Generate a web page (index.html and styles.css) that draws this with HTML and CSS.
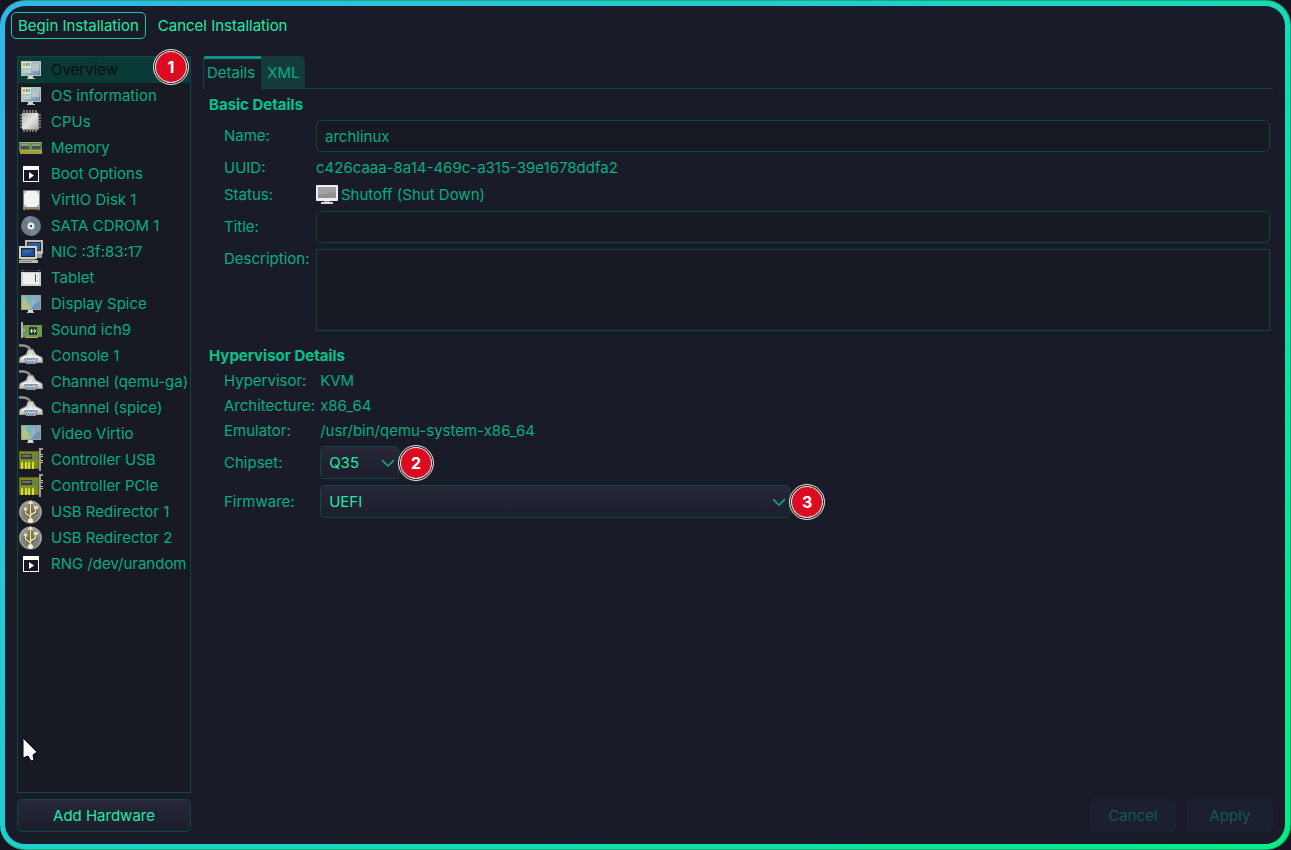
FILE: index.html
```
<!DOCTYPE html>
<html lang="en">
<head>
    <meta charset="utf-8">
    <title>archlinux</title>
    <link rel="stylesheet" href="styles.css">
</head>
<body>
    <svg class="sprite" aria-hidden="true">
        <defs>
            <linearGradient id="screen" x1="0" y1="0" x2="1" y2="1">
                <stop offset="0" stop-color="#a8c8a0"/>
                <stop offset="0.5" stop-color="#a5bdc8"/>
                <stop offset="1" stop-color="#6b83ad"/>
            </linearGradient>
            <linearGradient id="metal" x1="0" y1="0" x2="1" y2="1">
                <stop offset="0" stop-color="#a5a5a3"/>
                <stop offset="0.5" stop-color="#e6e6e4"/>
                <stop offset="1" stop-color="#a9a9a7"/>
            </linearGradient>
            <linearGradient id="disc" x1="0" y1="0" x2="0" y2="1">
                <stop offset="0" stop-color="#9a9a9a"/>
                <stop offset="1" stop-color="#777"/>
            </linearGradient>
            <linearGradient id="plug" x1="0" y1="0" x2="0" y2="1">
                <stop offset="0" stop-color="#c9c9c6"/>
                <stop offset="0.6" stop-color="#f4f4f2"/>
                <stop offset="1" stop-color="#b5b5b1"/>
            </linearGradient>
        </defs>
        <symbol id="computer" viewBox="0 0 24 24">
            <rect x="2" y="3" width="20" height="15" fill="#b9bec0"/>
            <rect x="3" y="4" width="18" height="13" fill="url(#screen)"/>
            <path d="M3 4h9v6H3z" fill="#dde5d0"/>
            <path d="M4 5h2v3H4z" fill="#e88d3b"/>
            <path d="M7 5h2v3H7z" fill="#4ab665"/>
            <path d="M10 5h1v3h-1z" fill="#4b8fd0"/>
            <path d="M4 11h8v4H4z" fill="#b9cfbd"/>
            <path d="M13 6h7v7h-7z" fill="#b3c3cc"/>
            <path d="M9 18h5v2H9z" fill="#d5d8da"/>
            <path d="M8 20h8v1H8z" fill="#c1c4c6"/>
        </symbol>
        <symbol id="cpu" viewBox="0 0 24 24">
            <path d="M5 0v22M8 0v22M11 0v22M14 0v22M17 0v22M1 5h21M1 8h21M1 11h21M1 14h21M1 17h21" stroke="#8d8a82" stroke-width="1.6"/>
            <rect x="3" y="3" width="17" height="17" rx="1" fill="#8e8e8c"/>
            <rect x="3" y="3" width="16" height="16" rx="1" fill="url(#metal)"/>
        </symbol>
        <symbol id="memory" viewBox="0 0 24 24">
            <rect x="0" y="6" width="23" height="9" fill="#5c8848"/>
            <rect x="0" y="6" width="23" height="1" fill="#9ab28c"/>
            <path d="M2 8h8v5H2zM13 8h8v5h-8z" fill="#4a4f4b"/>
            <path d="M2 8h8v2H2zM13 8h8v2h-8z" fill="#8f948e"/>
            <path d="M11 7h1v7h-1z" fill="#48c04a"/>
            <path d="M1 14h22v4H1z" fill="#b5ac45"/>
            <path d="M3 15v3M5 15v3M7 15v3M9 15v3M11 15v3M13 15v3M15 15v3M17 15v3M19 15v3M21 15v3" stroke="#7d8232" stroke-width="0.800"/>
        </symbol>
        <symbol id="run" viewBox="0 0 24 24">
            <path fill-rule="evenodd" d="M4 4h16v16H4zM5 8v11h14V8z" fill="#fff"/>
            <path d="M10 10l5 3.500-5 3.500z" fill="#fff"/>
        </symbol>
        <symbol id="disk" viewBox="0 0 24 24">
            <rect x="4" y="2" width="17" height="20" rx="1" fill="#85898a"/>
            <rect x="5" y="3" width="15" height="16" rx="4" fill="#f2f3f3"/>
            <path d="M5 3h2v2H5zM18 3h2v2h-2zM5 17h2v2H5zM18 17h2v2h-2z" fill="#b9bdbd"/>
            <path d="M7 20h11v2H7z" fill="#5b5040"/>
            <path d="M8 20h3v1H8zM12 20h2v1h-2zM15 20h2v1h-2z" fill="#e0a040"/>
        </symbol>
        <symbol id="cdrom" viewBox="0 0 24 24">
            <circle cx="12" cy="12" r="10" fill="#6b7a89"/>
            <path d="M12 12L5 4.900A10 10 0 0 1 12 2zM12 12l7 7.100A10 10 0 0 1 12 22z" fill="#778694"/>
            <circle cx="12" cy="12" r="3.500" fill="#e9ecee"/>
            <rect x="11" y="11" width="2" height="2" fill="#3a3f44"/>
        </symbol>
        <symbol id="nic" viewBox="0 0 24 24">
            <path d="M6 0h18v14H6z" fill="#bdbbb2"/>
            <path d="M8 2h14v9H8z" fill="#222c3d"/>
            <path d="M9 3h12v7H9z" fill="#2d5d9f"/>
            <path d="M17 14h6v4h-6z" fill="#9a988f"/>
            <path d="M0 6h18v13H0z" fill="#d2d0c7"/>
            <path d="M2 8h14v9H2z" fill="#1a2740"/>
            <path d="M3 9h12v7H3z" fill="#1e4f94"/>
            <path d="M4 10h10l-3 3-7 2z" fill="#2f65a6"/>
            <path d="M2 19h14v1H2z" fill="#77756e"/>
            <path d="M0 20h19v3H0z" fill="#bab8ae"/>
            <path d="M1 21h12v1H1z" fill="#858379"/>
        </symbol>
        <symbol id="tablet" viewBox="0 0 24 24">
            <path d="M2 4h20v1H2z" fill="#30343b"/>
            <path d="M3 4h2v1H3zM19 4h2v1h-2z" fill="#5a7694"/>
            <rect x="2" y="6" width="20" height="14" fill="#cfd1d1"/>
            <rect x="4" y="7" width="16" height="11" fill="#eeefef"/>
            <path d="M16.500 8v8" stroke="#555"/>
            <path d="M18.500 10v1M18.500 14v1" stroke="#aaa"/>
        </symbol>
        <symbol id="display" viewBox="0 0 24 24">
            <rect x="2" y="3" width="20" height="15" fill="#9aa1a5"/>
            <rect x="3" y="4" width="18" height="13" fill="#7fb0b5"/>
            <path d="M3 4h6l-6 7z" fill="#8fc0a8"/>
            <path d="M3 10l4-3 5 10H3z" fill="#b5c47c"/>
            <path d="M9 4h6l-5 7-3-4z" fill="#72b7b0"/>
            <path d="M15 4h6v5l-5 3z" fill="#8fa3c2"/>
            <path d="M15 4l1 8-4 5-2-6z" fill="#86b6c4"/>
            <path d="M16 12l5-3v8h-9z" fill="#7590b8"/>
            <path d="M9 18h5v2H9z" fill="#dce0e2"/>
            <path d="M8 20h7v1H8z" fill="#c1c4c6"/>
        </symbol>
        <symbol id="sound" viewBox="0 0 24 24">
            <path d="M3 7h20v12H3z" fill="#6a9c4c"/>
            <path d="M6 19h13v1H6z" fill="#c6ae47"/>
            <path d="M2 4h2v16H2z" fill="#a9b4b7"/>
            <path d="M4 8h2v2H4z" fill="#d14584"/>
            <path d="M4 11h2v2H4z" fill="#e0a23a"/>
            <path d="M4 14h2v2H4z" fill="#4197bc"/>
            <rect x="10" y="9" width="8" height="8" fill="#303632"/>
            <path d="M11 13h5M12.500 11v4M15 11l2 2-2 2" fill="none" stroke="#dce3df"/>
        </symbol>
        <symbol id="serial" viewBox="0 0 24 24">
            <path d="M0 1.500c7-.5 11 1 12 6" fill="none" stroke="#777b7b" stroke-width="2.600"/>
            <path d="M0 1.500c7-.5 11 1 12 6" fill="none" stroke="#a9aba9"/>
            <path d="M9 5h5l3 5 6 3q1 1 1 6H0q0-5 1-6l6-3z" fill="#9b9b97"/>
            <path d="M9.500 6h4l3 5 6 3 .5 4H1l.5-4 6-3z" fill="url(#plug)"/>
            <path d="M10 8l-2 5M13 8l2 5" stroke="#c4c4c0"/>
            <path d="M5 14h14l-2 6H7z" fill="#8c96a3"/>
            <path d="M7 15h10l-1 3H8z" fill="#b9cde6"/>
            <path d="M8 15h1v1H8zM10 15h1v1h-1zM12 15h1v1h-1zM14 15h1v1h-1zM9 17h1v1H9zM11 17h1v1h-1zM13 17h1v1h-1z" fill="#5d7ba5"/>
        </symbol>
        <symbol id="controller" viewBox="0 0 24 24">
            <path d="M0 3h20v18H0z" fill="#5f681b"/>
            <path d="M1 4h18v16H1z" fill="#7c8722"/>
            <path d="M2 6h11v5H2z" fill="#343a38"/>
            <path d="M3 7h9v2H3z" fill="#6d7470"/>
            <path d="M13 8h5M13 10h5" stroke="#397b9c"/>
            <path d="M2 21v-6l1-2 1 2v6zM6 21v-6l1-2 1 2v6zM9 21v-6l1-2 1 2v6zM13 21v-6l1-2 1 2v6z" fill="#d6e32f"/>
            <path d="M24 1h-3v22" fill="none" stroke="#9b9d98" stroke-width="2"/>
            <path d="M22 6h2v1h-2zM22 8h2v1h-2zM22 12h2v1h-2zM22 14h2v1h-2z" fill="#c8cac5"/>
        </symbol>
        <symbol id="usb" viewBox="0 0 24 24">
            <circle cx="11.500" cy="12" r="11.500" fill="url(#disc)"/>
            <circle cx="11.500" cy="12" r="10.500" fill="none" stroke="#aaa"/>
            <g fill="none" stroke="#544d31" stroke-width="3.500">
                <path d="M11.500 4v16M6.500 9v4l5 4M16.500 7v5l-5 3"/>
            </g>
            <g fill="none" stroke="#efe29c" stroke-width="1.600">
                <path d="M11.500 4v16M6.500 9v4l5 4M16.500 7v5l-5 3"/>
            </g>
            <path d="M11.500 0l3 4h-6zM15 6h4v3h-4z" fill="#efe29c"/>
            <circle cx="6.500" cy="9" r="1.800" fill="#efe29c"/>
            <circle cx="11.500" cy="20.500" r="2.500" fill="#f5f0d0"/>
        </symbol>
        <symbol id="shutoff" viewBox="0 0 22 20">
            <rect width="22" height="16" rx="1" fill="#eeeeec"/>
            <rect x="2" y="2" width="18" height="11" fill="#919191"/>
            <path d="M2 2h18v5L2 10z" fill="#a2a2a2"/>
            <path d="M8 16h6v1H8z" fill="#999"/>
            <path d="M5 17h12v2H5z" fill="#d3d3d1"/>
        </symbol>
        <symbol id="chevron" viewBox="0 0 12 8">
            <path d="M0 1l6 6 6-6" fill="none" stroke="#17a77e" stroke-width="1.600"/>
        </symbol>
    </svg>

    <div class="frame">
        <div class="window">
            <div class="toolbar">
                <button class="tool-btn focused" type="button">Begin Installation</button>
                <button class="tool-btn" type="button">Cancel Installation</button>
            </div>

            <div class="main">
                <div class="sidebar">
                    <ul class="hardware">
                        <li class="selected">
                            <button type="button"><svg><use href="#computer"/></svg>Overview</button>
                            <span class="badge">1</span>
                        </li>
                        <li><button type="button"><svg><use href="#computer"/></svg>OS information</button></li>
                        <li><button type="button"><svg><use href="#cpu"/></svg>CPUs</button></li>
                        <li><button type="button"><svg><use href="#memory"/></svg>Memory</button></li>
                        <li><button type="button"><svg><use href="#run"/></svg>Boot Options</button></li>
                        <li><button type="button"><svg><use href="#disk"/></svg>VirtIO Disk 1</button></li>
                        <li><button type="button"><svg><use href="#cdrom"/></svg>SATA CDROM 1</button></li>
                        <li><button type="button"><svg><use href="#nic"/></svg>NIC :3f:83:17</button></li>
                        <li><button type="button"><svg><use href="#tablet"/></svg>Tablet</button></li>
                        <li><button type="button"><svg><use href="#display"/></svg>Display Spice</button></li>
                        <li><button type="button"><svg><use href="#sound"/></svg>Sound ich9</button></li>
                        <li><button type="button"><svg><use href="#serial"/></svg>Console 1</button></li>
                        <li><button type="button"><svg><use href="#serial"/></svg>Channel (qemu-ga)</button></li>
                        <li><button type="button"><svg><use href="#serial"/></svg>Channel (spice)</button></li>
                        <li><button type="button"><svg><use href="#display"/></svg>Video Virtio</button></li>
                        <li><button type="button"><svg><use href="#controller"/></svg>Controller USB</button></li>
                        <li><button type="button"><svg><use href="#controller"/></svg>Controller PCIe</button></li>
                        <li><button type="button"><svg><use href="#usb"/></svg>USB Redirector 1</button></li>
                        <li><button type="button"><svg><use href="#usb"/></svg>USB Redirector 2</button></li>
                        <li><button type="button"><svg><use href="#run"/></svg>RNG /dev/urandom</button></li>
                    </ul>
                    <button class="btn" type="button">Add Hardware</button>
                    <svg class="cursor" viewBox="0 0 16 24" aria-hidden="true">
                        <path d="M1 1v20l5-2 3 5 3-1-1-5 4-3z" fill="#fff" stroke="#000"/>
                    </svg>
                </div>

                <div class="content">
                    <div class="tabs" role="tablist">
                        <button class="tab active" type="button" role="tab" aria-selected="true">Details</button>
                        <button class="tab" type="button" role="tab" aria-selected="false">XML</button>
                    </div>

                    <div class="panel">
                        <h2>Basic Details</h2>
                        <div class="fields">
                            <label for="name">Name:</label>
                            <input id="name" type="text" value="archlinux">
                            <span>UUID:</span>
                            <span>c426caaa-8a14-469c-a315-39e1678ddfa2</span>
                            <span>Status:</span>
                            <span class="status"><svg><use href="#shutoff"/></svg>Shutoff (Shut Down)</span>
                            <label for="title">Title:</label>
                            <input id="title" type="text">
                            <label class="top" for="description">Description:</label>
                            <textarea id="description"></textarea>
                        </div>

                        <h2>Hypervisor Details</h2>
                        <div class="fields hypervisor">
                            <span>Hypervisor:</span>
                            <span>KVM</span>
                            <span>Architecture:</span>
                            <span>x86_64</span>
                            <span>Emulator:</span>
                            <span>/usr/bin/qemu-system-x86_64</span>
                            <label for="chipset">Chipset:</label>
                            <div class="combo small">
                                <select id="chipset"><option>Q35</option></select>
                                <svg class="arrow"><use href="#chevron"/></svg>
                                <span class="badge">2</span>
                            </div>
                            <label for="firmware">Firmware:</label>
                            <div class="combo">
                                <select id="firmware"><option>UEFI</option></select>
                                <svg class="arrow"><use href="#chevron"/></svg>
                                <span class="badge">3</span>
                            </div>
                        </div>
                    </div>

                    <div class="actions">
                        <button class="btn" type="button" disabled>Cancel</button>
                        <button class="btn" type="button" disabled>Apply</button>
                    </div>
                </div>
            </div>
        </div>
    </div>
</body>
</html>
```

FILE: styles.css
```
* {
    box-sizing: border-box;
}
body {
    margin: 0;
    background: #171320;
    color: #06ad7e;
    font-family: Inter, sans-serif;
    font-size: 15px;
    line-height: 20px;
}
button, input, select, textarea {
    font: inherit;
    color: inherit;
    margin: 0;
}
.sprite {
    position: absolute;
    width: 0;
    height: 0;
}
.frame {
    display: flex;
    min-height: 100vh;
    padding: 5px;
    border: 1px solid #1ea96e;
    border-left: 0;
    border-radius: 25px;
    background: linear-gradient(135deg, #33b5ee, #1ad6c5 50%, #00ee84);
}
.window {
    flex: 1;
    display: flex;
    flex-direction: column;
    padding: 6px 12px 12px;
    border-radius: 20px;
    background: #191c28;
}
.toolbar {
    display: flex;
    gap: 5px;
    margin: 0 -6px 17px;
}
.tool-btn {
    height: 27px;
    padding: 0 6px;
    border: 1px solid transparent;
    border-radius: 5px;
    background: none;
    color: #26e8a6;
}
.tool-btn.focused {
    border-color: #14c8ae;
}
.main {
    flex: 1;
    display: flex;
    gap: 12px;
}
.sidebar {
    position: relative;
    width: 174px;
    display: flex;
    flex-direction: column;
    gap: 6px;
}
.hardware {
    flex: 1;
    margin: 0;
    padding: 0;
    list-style: none;
    border: 1px solid #124640;
    background: #171923;
}
.hardware li {
    position: relative;
}
.hardware button {
    display: flex;
    align-items: center;
    gap: 8px;
    width: 100%;
    height: 26px;
    padding: 0 0 0 1px;
    border: 0;
    background: none;
    white-space: nowrap;
}
.hardware svg {
    flex: none;
    width: 24px;
    height: 24px;
}
.hardware .selected {
    background: #093a35;
    color: #000d0b;
}
.badge {
    position: absolute;
    top: -1px;
    left: 100%;
    width: 36px;
    height: 36px;
    margin-left: -1px;
    border: 1px solid #ddd;
    border-radius: 50%;
    background: #db0b22;
    box-shadow: inset 0 0 0 1px #111, inset 0 0 0 2px #eee;
    color: #fff;
    font-size: 16px;
    font-weight: bold;
    line-height: 34px;
    text-align: center;
}
.hardware .badge {
    top: -8px;
    right: 1px;
    left: auto;
}
.btn {
    height: 33px;
    border: 1px solid #124640;
    border-radius: 5px;
    background: linear-gradient(#262839, #1c1e2c);
    color: #26e8a6;
}
.btn:disabled {
    width: 86px;
    border-color: #1a2230;
    background: #1c1f2d;
    color: #12594e;
}
.cursor {
    position: absolute;
    left: 5px;
    bottom: 71px;
    width: 16px;
    height: 24px;
}
.content {
    flex: 1;
    display: flex;
    flex-direction: column;
}
.tabs {
    display: flex;
    border-bottom: 1px solid #124640;
}
.tab {
    height: 32px;
    padding: 2px 6px 0;
    border: 0;
    border-radius: 0 5px 0 0;
    background: #153b3d;
}
.tab.active {
    height: 33px;
    margin-bottom: -1px;
    padding: 1px 6px 0 3px;
    border-left: 1px solid #124640;
    border-radius: 2px 0 0 0;
    background: #191c28;
    box-shadow: inset 0 3px #079386;
}
.panel {
    flex: 1;
    padding: 6px 3px 0 6px;
}
h2 {
    margin: 0 0 5px;
    color: #04c38c;
    font-size: 15px;
    line-height: 20px;
}
.fields {
    display: grid;
    grid-template-columns: minmax(86px, auto) 1fr;
    gap: 6px;
    align-items: center;
    margin: 0 0 15px 15px;
}
.hypervisor {
    gap: 5px;
}
.fields .top {
    align-self: start;
}
.fields input, .fields textarea {
    width: 100%;
    height: 32px;
    padding: 0 8px;
    border: 1px solid #124640;
    border-radius: 5px;
    background: #171923;
}
.fields textarea {
    display: block;
    height: 82px;
    border-radius: 0;
    resize: none;
}
.status {
    display: flex;
    align-items: center;
    gap: 3px;
    height: 21px;
}
.status svg {
    width: 22px;
    height: 20px;
}
.combo {
    position: relative;
    width: 50%;
    max-width: 470px;
}
.combo.small {
    width: 79px;
    margin-bottom: 1px;
}
.combo select {
    display: block;
    width: 100%;
    height: 33px;
    padding: 0 8px;
    appearance: none;
    border: 1px solid #124640;
    border-radius: 5px;
    background: linear-gradient(#262839, #1c1e2c);
    color: #26e8a6;
}
.arrow {
    position: absolute;
    top: 13px;
    right: 5px;
    width: 12px;
    height: 8px;
    pointer-events: none;
}
.actions {
    display: flex;
    justify-content: flex-end;
    gap: 11px;
}
```
